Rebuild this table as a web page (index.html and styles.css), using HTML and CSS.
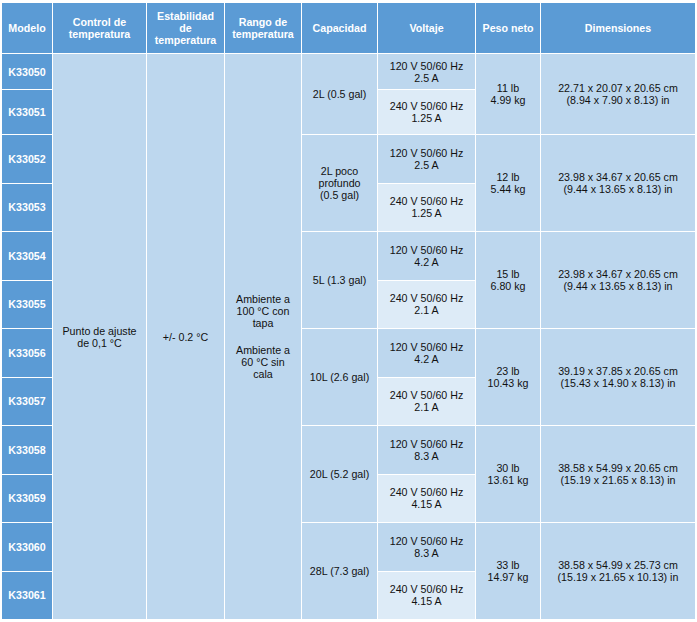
FILE: index.html
```html
<!DOCTYPE html>
<html lang="es">
<head>
<meta charset="utf-8">
<title>Especificaciones</title>
<link rel="stylesheet" href="styles.css">
</head>
<body>
<div class="spec">
  <div class="c head">Modelo</div>
  <div class="c head">Control de temperatura</div>
  <div class="c head">Estabilidad de temperatura</div>
  <div class="c head">Rango de temperatura</div>
  <div class="c head">Capacidad</div>
  <div class="c head">Voltaje</div>
  <div class="c head">Peso neto</div>
  <div class="c head">Dimensiones</div>

  <div class="c model">K33050</div>
  <div class="c body all">Punto de ajuste de 0,1 °C</div>
  <div class="c body all">+/- 0.2 °C</div>
  <div class="c body all range"><p>Ambiente a 100 °C con tapa</p><p class="second">Ambiente a 60 °C sin cala</p></div>
  <div class="c body pair">2L (0.5 gal)</div>
  <div class="c body">120 V 50/60 Hz<br>2.5 A</div>
  <div class="c body pair">11 lb<br>4.99 kg</div>
  <div class="c body pair">22.71 x 20.07 x 20.65 cm<br>(8.94 x 7.90 x 8.13) in</div>
  <div class="c model">K33051</div>
  <div class="c alt">240 V 50/60 Hz<br>1.25 A</div>

  <div class="c model">K33052</div>
  <div class="c body pair">2L poco profundo (0.5 gal)</div>
  <div class="c body">120 V 50/60 Hz<br>2.5 A</div>
  <div class="c body pair">12 lb<br>5.44 kg</div>
  <div class="c body pair">23.98 x 34.67 x 20.65 cm<br>(9.44 x 13.65 x 8.13) in</div>
  <div class="c model">K33053</div>
  <div class="c alt">240 V 50/60 Hz<br>1.25 A</div>

  <div class="c model">K33054</div>
  <div class="c body pair">5L (1.3 gal)</div>
  <div class="c body">120 V 50/60 Hz<br>4.2 A</div>
  <div class="c body pair">15 lb<br>6.80 kg</div>
  <div class="c body pair">23.98 x 34.67 x 20.65 cm<br>(9.44 x 13.65 x 8.13) in</div>
  <div class="c model">K33055</div>
  <div class="c alt">240 V 50/60 Hz<br>2.1 A</div>

  <div class="c model">K33056</div>
  <div class="c body pair">10L (2.6 gal)</div>
  <div class="c body">120 V 50/60 Hz<br>4.2 A</div>
  <div class="c body pair">23 lb<br>10.43 kg</div>
  <div class="c body pair">39.19 x 37.85 x 20.65 cm<br>(15.43 x 14.90 x 8.13) in</div>
  <div class="c model">K33057</div>
  <div class="c alt">240 V 50/60 Hz<br>2.1 A</div>

  <div class="c model">K33058</div>
  <div class="c body pair">20L (5.2 gal)</div>
  <div class="c body">120 V 50/60 Hz<br>8.3 A</div>
  <div class="c body pair">30 lb<br>13.61 kg</div>
  <div class="c body pair">38.58 x 54.99 x 20.65 cm<br>(15.19 x 21.65 x 8.13) in</div>
  <div class="c model">K33059</div>
  <div class="c alt">240 V 50/60 Hz<br>4.15 A</div>

  <div class="c model">K33060</div>
  <div class="c body pair">28L (7.3 gal)</div>
  <div class="c body">120 V 50/60 Hz<br>8.3 A</div>
  <div class="c body pair">33 lb<br>14.97 kg</div>
  <div class="c body pair">38.58 x 54.99 x 25.73 cm<br>(15.19 x 21.65 x 10.13) in</div>
  <div class="c model">K33061</div>
  <div class="c alt">240 V 50/60 Hz<br>4.15 A</div>
</div>
</body>
</html>
```

FILE: styles.css
```css
html, body {
  margin: 0;
  padding: 0;
  background: #ffffff;
}

body {
  font-family: "Liberation Sans", Arial, sans-serif;
  font-size: 10.67px;
  line-height: 12px;
  color: #111111;
}

.spec {
  display: grid;
  grid-template-columns: 50px 93px 77px 76px 75px 97px 64px 154px;
  grid-template-rows: 50px 35px 44px repeat(10, 47.5px);
  gap: 1px;
  margin: 3px 0 0 2px;
  width: max-content;
  background: #ffffff;
}

.c {
  display: flex;
  flex-direction: column;
  align-items: center;
  justify-content: center;
  text-align: center;
  padding: 0 7px;
  min-width: 0;
}

.head {
  background: #5b9bd5;
  color: #ffffff;
  font-weight: bold;
  padding: 0 3px;
}

.model {
  background: #5b9bd5;
  color: #ffffff;
  font-weight: bold;
  padding: 0 2px;
}

.body {
  background: #bdd7ee;
}

.alt {
  background: #ddebf7;
}

.all {
  grid-row: span 12;
}

.pair {
  grid-row: span 2;
}

.range p {
  margin: 0;
}

.range .second {
  margin-top: 15px;
}
```
